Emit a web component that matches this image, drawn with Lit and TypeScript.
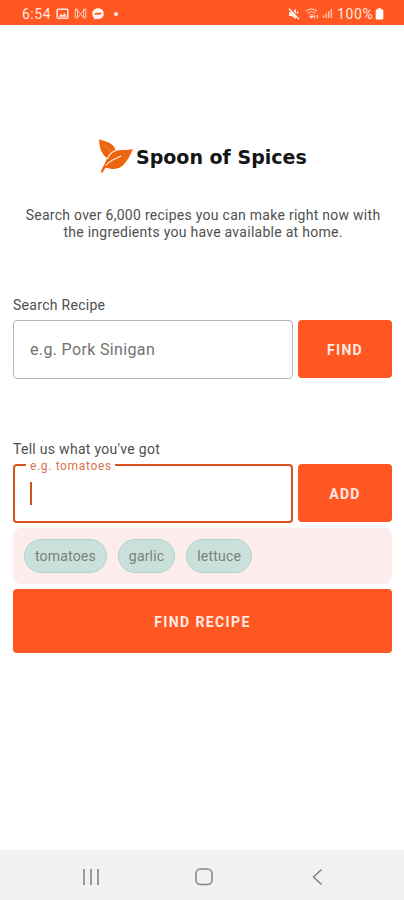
import { LitElement, html, css, svg } from "lit";
import { customElement, property } from "lit/decorators.js";

@customElement("status-bar")
class StatusBar extends LitElement {
  static styles = css`
    :host {
      display: flex;
      align-items: center;
      justify-content: space-between;
      box-sizing: border-box;
      height: 25px;
      padding: 2px 20px 0 22px;
      background: #ff5722;
      color: #ffe9df;
      font: 14px/18px Roboto, sans-serif;
    }
    .group { display: flex; align-items: center; }
    .time { width: 34px; letter-spacing: 0.5px; }
    .level { width: 38px; margin-left: 4px; letter-spacing: 0.6px; }
    svg { display: block; }
    .mail { margin-left: 5px; }
    .chat { margin-left: 5px; }
    .dot { width: 4px; height: 4px; margin-left: 10px; border-radius: 50%; background: #fff3ec; }
    .wifi { margin-left: 5px; }
    .signal { margin-left: 2px; }
  `;
  render() {
    return html`
      <div class="group">
        <span class="time">6:54</span>
        <svg width="13" height="12" viewBox="0 0 13 12">
          <rect x="1.2" y="1.2" width="10.6" height="9" rx="1" fill="none" stroke="#ffe9df" stroke-width="1.5" />
          <path d="M2.5 8.8 5 5.800l1.600 1.600L8.500 5l2.300 3.800z" fill="#ffe9df" />
        </svg>
        <svg class="mail" width="13" height="11" viewBox="0 0 13 11">
          <path d="M1.200 1.200v8.600h2.300V1.200zM9.500 1.200v8.600h2.300V1.200zM1.500 1.200l5 4.300 5-4.300M3.600 9.500l2.900-3.500 2.900 3.500" stroke="#ffd0bd" stroke-width="1" fill="none" />
        </svg>
        <svg class="chat" width="12" height="12" viewBox="0 0 12 12">
          <path d="M6 .3C2.700.3.2 2.600.2 5.700c0 1.800.8 3.200 2 4.200v1.800l1.700-.9c.7.2 1.400.3 2.100.3 3.300 0 5.800-2.300 5.800-5.400S9.300.3 6 .3z" fill="#fff3ec" />
          <path d="m2.800 6.300 2.300-.9 1.600.6L9.200 5.200" stroke="#ff5722" stroke-width="1.700" fill="none" />
        </svg>
        <span class="dot"></span>
      </div>
      <div class="group">
        <svg width="12" height="12" viewBox="0 0 12 12">
          <path d="M1 4.200h2.500L8 1v10L3.500 8H1z" fill="#fff0e8" />
          <path d="M1.800 0 12 10.600" stroke="#ff5722" stroke-width="1.200" />
          <path d="M1 .8 11 11.200M9.500 3.500v2" stroke="#fff0e8" stroke-width="1.500" fill="none" />
        </svg>
        <svg class="wifi" width="15" height="11" viewBox="0 0 15 11">
          <path d="M.8 3.300C4 .2 9 .2 12.200 3.300M2.700 5.400c2.200-2.100 5.500-2.100 7.600 0M4.600 7.400c1.200-1 2.700-1 3.800 0" stroke="#ffb69c" stroke-width="1.300" fill="none" />
          <path d="M6.500 10 5 8.500h3zM9.800 7v3.500M12.500 7v3.500" stroke="#ffd6c6" stroke-width="1.100" fill="#ffd6c6" />
        </svg>
        <svg class="signal" width="11" height="11" viewBox="0 0 10 11">
          <path d="M1 7.500V10M3.600 5.500V10M6.200 3.200V10M8.800 1V10" stroke="#ffc2ab" stroke-width="1.500" />
        </svg>
        <span class="level">100%</span>
        <svg width="9" height="12" viewBox="0 0 9 12">
          <path d="M2.800.3h3.400v1.200h1.100q1 0 1 1v8q0 1-1 1H1.700q-1 0-1-1v-8q0-1 1-1h1.100z" fill="#fff" />
        </svg>
      </div>
    `;
  }
}

@customElement("text-field")
class TextField extends LitElement {
  @property() hint = "";
  @property({ type: Boolean, reflect: true }) focused = false;
  static styles = css`
    :host {
      display: flex;
      position: relative;
      align-items: center;
      box-sizing: border-box;
      width: 280px;
      height: 59px;
      padding-left: 16px;
      border: 1px solid #b5b5b5;
      border-radius: 4px;
      color: #727272;
      font: 16px/20px Roboto, sans-serif;
    }
    :host([focused]) { border: 2px solid #d7521c; padding-left: 15px; }
    .hint { letter-spacing: 0.35px; }
    .floating {
      position: absolute;
      left: 11px;
      top: -8px;
      padding: 0 3px 0 4px;
      background: #fff;
      color: #d9734c;
      font-size: 12px;
      line-height: 16px;
      letter-spacing: 0.65px;
    }
    .caret { width: 2px; height: 23px; background: #cf5320; }
  `;
  render() {
    return this.focused
      ? html`<span class="floating">${this.hint}</span><span class="caret"></span>`
      : html`<span class="hint">${this.hint}</span>`;
  }
}

@customElement("nav-bar")
class NavBar extends LitElement {
  static styles = css`
    :host {
      display: flex;
      align-items: center;
      justify-content: space-between;
      box-sizing: border-box;
      height: 50px;
      padding: 3px 78px 0 82px;
      background: #f1f1f1;
    }
    svg { display: block; }
  `;
  icon(body: unknown) {
    return html`<svg width="18" height="18" viewBox="0 0 18 18" fill="none" stroke="#858585" stroke-width="1.6">${body}</svg>`;
  }
  render() {
    return html`
      ${this.icon(svg`<path d="M2 1v16M9 1v16M16 1v16" />`)}
      ${this.icon(svg`<rect x="1" y="1" width="16" height="15.500" rx="4.500" />`)}
      ${this.icon(svg`<path d="M13.500 1.500 5.500 9l8 7.500" />`)}
    `;
  }
}

@customElement("app-root")
class AppRoot extends LitElement {
  static styles = css`
    :host {
      display: flex;
      flex-direction: column;
      box-sizing: border-box;
      height: 900px;
      background: #fff;
      font-family: Roboto, sans-serif;
    }
    main { flex: 1; padding: 0 12px 0 13px; }
    .brand {
      display: flex;
      align-items: center;
      height: 36px;
      margin: 113px 0 0 84px;
    }
    .brand svg { display: block; flex: none; }
    h1 {
      margin: 1px 0 0 2px;
      color: #151515;
      font: bold 19px/24px "DejaVu Sans", sans-serif;
      white-space: nowrap;
    }
    .intro {
      margin: 33px 0 0;
      padding-left: 1px;
      color: #4f4f4f;
      font-size: 14px;
      line-height: 17px;
      letter-spacing: 0.270px;
      text-align: center;
      white-space: nowrap;
    }
    .label {
      display: block;
      color: #4f4f4f;
      font-size: 14px;
      line-height: 20px;
      letter-spacing: 0.290px;
    }
    .search { margin-top: 54px; }
    .pantry { margin-top: 60px; }
    .row { display: flex; justify-content: space-between; margin-top: 5px; }
    button {
      width: 94px;
      height: 58px;
      padding: 1px 0 0;
      border: 0;
      border-radius: 4px;
      background: #ff5722;
      color: #ffebe3;
      font: 700 14px/20px Roboto, sans-serif;
      letter-spacing: 1.300px;
    }
    .chips {
      display: flex;
      align-items: center;
      gap: 11px;
      box-sizing: border-box;
      height: 56px;
      margin-top: 5px;
      padding-left: 11px;
      border-radius: 8px;
      background: #fdecec;
    }
    .chip {
      box-sizing: border-box;
      height: 34px;
      padding: 0 10px;
      border: 1px solid #add5c9;
      border-radius: 17px;
      background: #cbe0da;
      color: #77827e;
      font-size: 14px;
      line-height: 33px;
      letter-spacing: 0.180px;
    }
    .wide { display: block; width: 100%; height: 64px; margin-top: 5px; letter-spacing: 1.400px; }
  `;
  render() {
    return html`
      <status-bar></status-bar>
      <main>
        <div class="brand">
          <svg width="37" height="36" viewBox="0 0 37 36" fill="#ee6510">
            <path d="M2 1.500C11 3.500 18 6.500 18.500 13 14 14.500 11.500 17.500 10.500 20.500 4 16 2.500 9 2 1.500Z" />
            <path d="M36 11C30 25 25 30.500 17 31 13 31 10.500 29.500 8.500 30 7 31 6.500 33 5.500 35L3.800 34C5 30.500 6 28.500 7.200 27 10 20 12 14.500 20 12.500 25 11.500 30 12.500 36 11Z" />
            <path d="M19 12.600C14 14.200 11.800 17 10.400 21M9 27.500C12 22.500 18 21.500 24 18" fill="none" stroke="#fff1e6" stroke-width="1.100" />
            <path d="M7 7C9 8.500 11.500 10.500 13.500 14" fill="none" stroke="#f6a56c" stroke-width=".6" />
          </svg>
          <h1>Spoon of Spices</h1>
        </div>
        <p class="intro">Search over 6,000 recipes you can make right now with<br />the ingredients you have available at home.</p>
        <section class="search">
          <span class="label">Search Recipe</span>
          <div class="row">
            <text-field hint="e.g. Pork Sinigan"></text-field>
            <button>FIND</button>
          </div>
        </section>
        <section class="pantry">
          <span class="label">Tell us what you've got</span>
          <div class="row">
            <text-field hint="e.g. tomatoes" focused></text-field>
            <button>ADD</button>
          </div>
        </section>
        <div class="chips">
          ${["tomatoes", "garlic", "lettuce"].map((name) => html`<span class="chip">${name}</span>`)}
        </div>
        <button class="wide">FIND RECIPE</button>
      </main>
      <nav-bar></nav-bar>
    `;
  }
}
